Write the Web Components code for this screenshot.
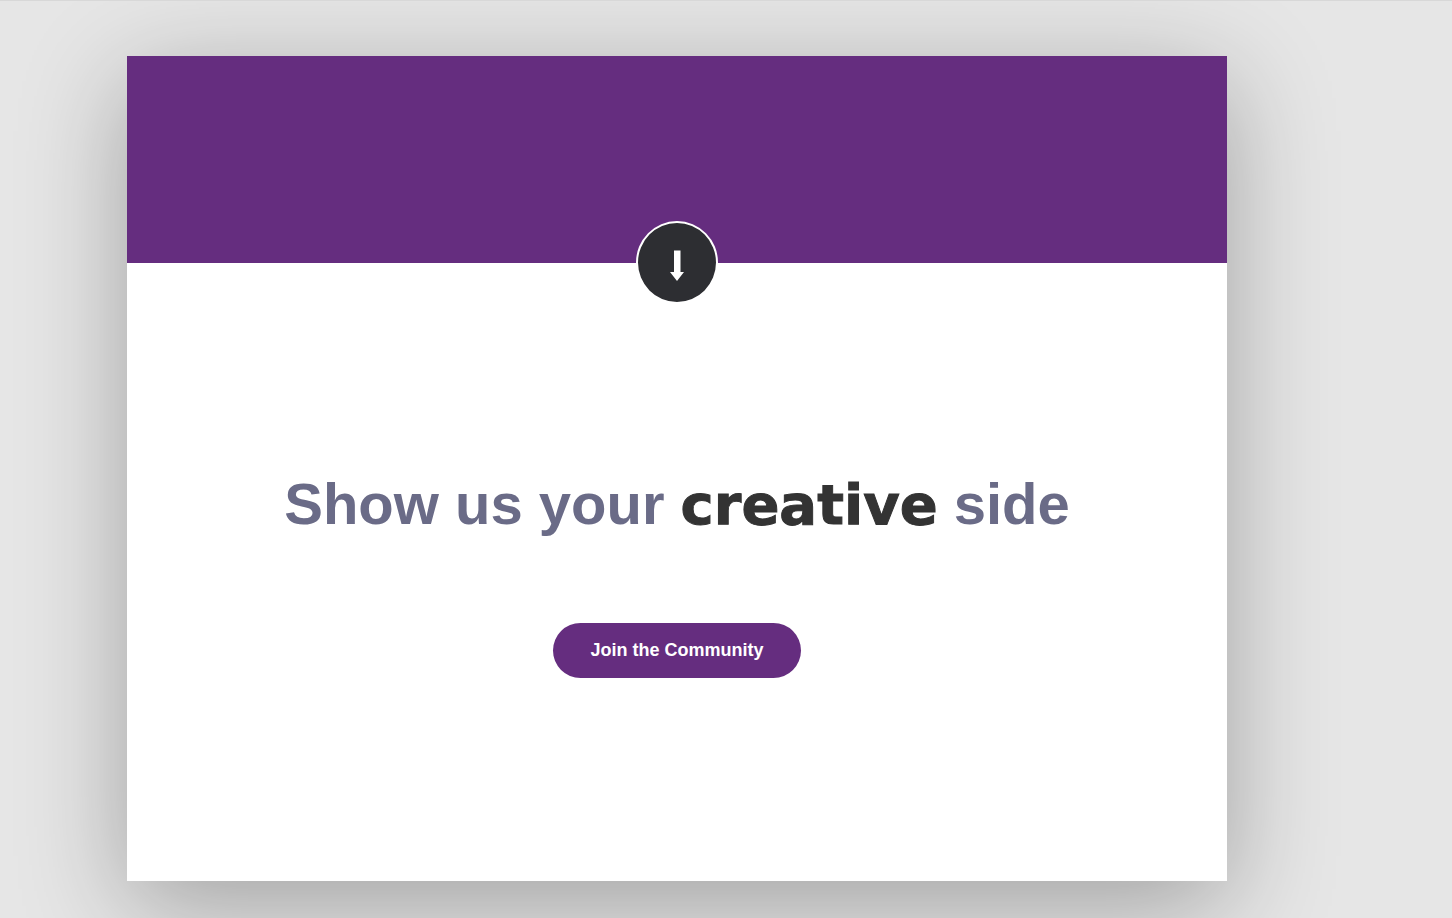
<!DOCTYPE html>
<html lang="en">
<head>
<meta charset="utf-8">
<meta name="viewport" content="width=device-width, initial-scale=1">
<title>Show us your creative side</title>
<style>
  html { background: #e6e6e6; }
  body { margin: 0; font-family: "Liberation Sans", Arial, sans-serif; }
</style>
</head>
<body>
<creative-page>
  <promo-card>
    <scroll-badge slot="badge"></scroll-badge>
    <promo-title>Show us your <strong slot="accent">creative</strong><span slot="rest">side</span></promo-title>
    <pill-button>Join the Community</pill-button>
  </promo-card>
</creative-page>
<script>
const define = (name, html) => {
  const template = document.createElement('template');
  template.innerHTML = html;
  customElements.define(name, class extends HTMLElement {
    constructor() {
      super();
      this.attachShadow({ mode: 'open' }).append(template.content.cloneNode(true));
    }
  });
};

define('creative-page', `
  <style>
    :host {
      display: block;
      box-sizing: border-box;
      min-height: 100vh;
      overflow: hidden;
      padding: 55px 225px 37px 127px;
      border-top: 1px solid #d8d8d8;
      background: #e6e6e6;
    }
    @media (max-width: 900px) { :host { padding: 32px; } }
  </style>
  <slot></slot>`);

define('promo-card', `
  <style>
    :host {
      display: flex;
      flex-direction: column;
      aspect-ratio: 4 / 3;
      background: #fff;
      box-shadow: 0 25px 100px rgba(0, 0, 0, .3);
    }
    header {
      flex: 0 0 207px;
      display: flex;
      justify-content: center;
      align-items: flex-end;
      background: #652d7f;
    }
    ::slotted([slot="badge"]) { margin-bottom: -41px; }
    main {
      flex: 1;
      display: flex;
      flex-direction: column;
      justify-content: center;
      align-items: center;
      gap: 86px;
      padding: 20px 16px 16px;
    }
  </style>
  <header><slot name="badge"></slot></header>
  <main><slot></slot></main>`);

define('scroll-badge', `
  <style>
    :host { display: block; }
    button {
      display: grid;
      place-items: center;
      box-sizing: border-box;
      width: 82px;
      height: 83px;
      padding: 7px 0 0;
      border: 2px solid #fff;
      border-radius: 50%;
      background: #2d2e32;
      color: #fff;
      cursor: pointer;
    }
    svg { display: block; }
  </style>
  <button type="button" aria-label="Scroll down">
    <svg width="14" height="32" viewBox="0 0 14 32" fill="currentColor" aria-hidden="true">
      <path d="M4 0.5h6.5v21.5h3.500l-7 9-7-9h4z"/>
    </svg>
  </button>`);

define('promo-title', `
  <style>
    :host { display: block; }
    h1 {
      margin: 0;
      font-size: 58px;
      line-height: 66px;
      font-weight: 700;
      text-align: center;
      color: #6a6b87;
    }
    ::slotted(strong) {
      font-family: "Arial Black", "DejaVu Sans", sans-serif;
      font-size: 56px;
      line-height: 1;
      font-weight: 900;
      color: #333;
      -webkit-text-stroke: 1px #333;
    }
  </style>
  <h1><slot></slot><slot name="accent"></slot> <slot name="rest"></slot></h1>`);

define('pill-button', `
  <style>
    :host { display: block; }
    button {
      display: block;
      padding: 16px 37px;
      border: 0;
      border-radius: 28px;
      background: #652d7f;
      color: #fff;
      font: inherit;
      font-size: 18px;
      line-height: 23px;
      font-weight: 700;
      cursor: pointer;
    }
  </style>
  <button type="button"><slot></slot></button>`);
</script>
</body>
</html>
